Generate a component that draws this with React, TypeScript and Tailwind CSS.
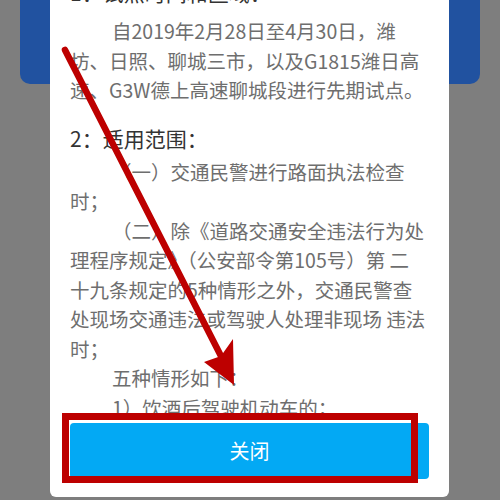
const body = "text-[19.5px] leading-[29.5px] text-[#6e6e6e] whitespace-nowrap";
const head = "text-[21px] text-[#333333] whitespace-nowrap";

const lines: { text: string; indent?: boolean }[] = [
  { text: "（一）交通民警进行路面执法检查", indent: true },
  { text: "时；" },
  { text: "（二）除《道路交通安全违法行为处", indent: true },
  { text: "理程序规定》（公安部令第105号）第 二" },
  { text: "十九条规定的5种情形之外，交通民警查" },
  { text: "处现场交通违法或驾驶人处理非现场 违法" },
  { text: "时；" },
  { text: "五种情形如下：", indent: true },
  { text: "1）饮酒后驾驶机动车的；", indent: true },
];

export default function App() {
  return (
    <div
      className="relative w-[500px] h-[500px] overflow-hidden bg-[#7e7e7e]"
      style={{ fontFamily: '"Noto Sans CJK SC", "Noto Sans", sans-serif' }}
    >
      {/* page behind the overlay */}
      <div className="mx-[20px] h-[84px] rounded-b-[10px] bg-[#2152a0]" />

      {/* dialog */}
      <div className="absolute left-[50px] top-0 bottom-[3px] w-[399px] rounded-b-[6px] bg-white overflow-hidden flex flex-col">
        <div className="-mt-[20px] px-[20px]">
          <div className={`${head} leading-[24px] mb-[12px]`}>1：试点时间和区域：</div>
          <div className={`${body} pl-[42px]`}>自2019年2月28日至4月30日，潍</div>
          <div className={body}>坊、日照、聊城三市，以及G1815潍日高</div>
          <div className={body}>速、G3W德上高速聊城段进行先期试点。</div>
          <div className={`${head} leading-[34px] mt-[16px] mb-[2px]`}>2：适用范围：</div>
          {lines.map((l, i) => (
            <div key={i} className={`${body} ${l.indent ? "pl-[42px]" : ""}`}>
              {l.text}
            </div>
          ))}
        </div>
        <div className="mx-[20px] mt-[1px] h-[56px] rounded-[4px] bg-[#03a9f4] flex items-center justify-center text-white text-[20px]">
          关闭
        </div>
      </div>

      {/* annotation: red box */}
      <div className="absolute left-[62px] top-[413px] w-[356px] h-[70px] border-[7px] border-[#bd0000]" />

      {/* annotation: red arrow */}
      <svg className="absolute inset-0" width="500" height="500" viewBox="0 0 500 500">
        <line x1="65" y1="50" x2="224" y2="362" stroke="#bd0000" strokeWidth="6.5" strokeLinecap="round" />
        <polygon points="234,385 204,362 221,356 233,339" fill="#bd0000" />
      </svg>
    </div>
  );
}
